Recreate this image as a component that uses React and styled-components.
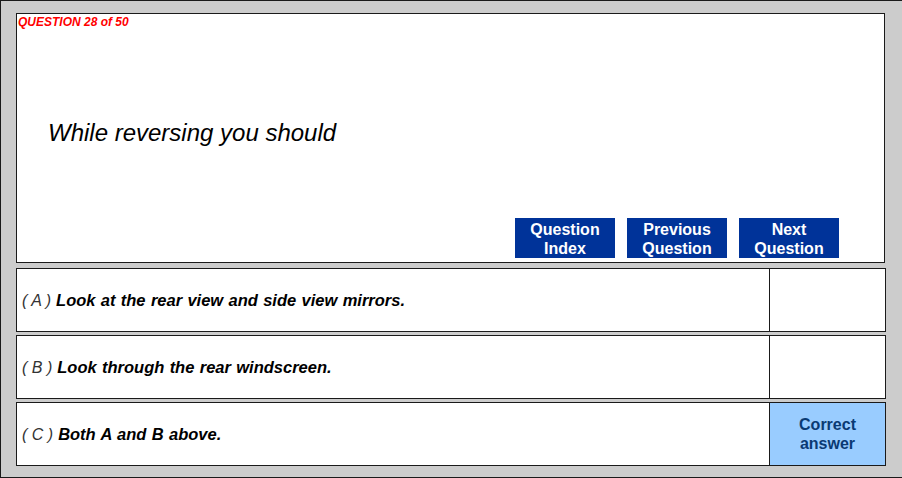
import React from "react";
import styled, { createGlobalStyle } from "styled-components";

const Global = createGlobalStyle`
  html, body { margin: 0; padding: 0; background: #cccccc; }
  * { box-sizing: border-box; }
`;

const Frame = styled.div`
  width: 902px;
  height: 478px;
  background: #cccccc;
  border-left: 1px solid #1a1a1a;
  border-top: 1px solid #1a1a1a;
  border-bottom: 1px solid #1a1a1a;
  padding: 12px 0 0 15px;
  font-family: "Liberation Sans", Arial, sans-serif;
  display: flex;
  flex-direction: column;
`;

const QuestionPanel = styled.section`
  width: 869px;
  height: 250px;
  background: #ffffff;
  border: 1px solid #1a1a1a;
  display: flex;
  flex-direction: column;
`;

const Counter = styled.div`
  color: #ff0000;
  font-size: 12px;
  font-weight: bold;
  font-style: italic;
  padding: 1px 0 0 1px;
  line-height: 14px;
`;

const QuestionText = styled.div`
  margin: 90px 0 0 31px;
  font-size: 24px;
  font-style: italic;
  color: #000;
  line-height: 28px;
`;

const ButtonRow = styled.div`
  margin-top: auto;
  display: flex;
  justify-content: flex-end;
  gap: 12px;
  padding: 0 45px 4px 0;
`;

const NavButton = styled.button`
  width: 100px;
  height: 40px;
  border: none;
  padding: 1px 0 0;
  margin: 0;
  background: #003399;
  color: #ffffff;
  font-family: "Liberation Sans", Arial, sans-serif;
  font-size: 16px;
  font-weight: bold;
  line-height: 19px;
  text-align: center;
  cursor: pointer;
`;

const Answers = styled.div`
  margin-top: 5px;
  display: flex;
  flex-direction: column;
  gap: 3px;
`;

const AnswerRow = styled.div`
  width: 870px;
  height: 64px;
  background: #ffffff;
  border: 1px solid #1a1a1a;
  display: grid;
  grid-template-columns: 1fr 115px;
`;

const AnswerText = styled.div`
  display: flex;
  align-items: center;
  padding: 0 0 0 5px;
  border-right: 1px solid #1a1a1a;
`;

const Line = styled.p`
  margin: 0;
  font-size: 16.5px;
  line-height: 20px;
  font-style: italic;
  font-weight: bold;
  color: #000;
`;

const Letter = styled.span`
  font-size: 16px;
  font-weight: normal;
  color: #333;
  margin-right: 5px;
  white-space: pre;
`;

const Body = styled.span`
  word-spacing: 0.75px;
`;

const Mark = styled.div`
  background: ${(p) => (p.$correct ? "#99ccff" : "#ffffff")};
  color: #0a3a73;
  font-size: 16px;
  font-weight: bold;
  line-height: 19px;
  display: flex;
  align-items: center;
  justify-content: center;
  text-align: center;
`;

const answers = [
  { key: "A", text: "Look at the rear view and side view mirrors." },
  { key: "B", text: "Look through the rear windscreen." },
  { key: "C", text: "Both A and B above.", correct: true },
];

export default function App() {
  return (
    <>
      <Global />
      <Frame>
        <QuestionPanel>
          <Counter>QUESTION 28 of 50</Counter>
          <QuestionText>While reversing you should</QuestionText>
          <ButtonRow>
            <NavButton>Question<br />Index</NavButton>
            <NavButton>Previous<br />Question</NavButton>
            <NavButton>Next<br />Question</NavButton>
          </ButtonRow>
        </QuestionPanel>
        <Answers>
          {answers.map((a) => (
            <AnswerRow key={a.key}>
              <AnswerText>
                <Line>
                  <Letter>( {a.key} )</Letter>
                  <Body>{a.text}</Body>
                </Line>
              </AnswerText>
              <Mark $correct={a.correct}>
                {a.correct ? (
                  <span>Correct<br />answer</span>
                ) : null}
              </Mark>
            </AnswerRow>
          ))}
        </Answers>
      </Frame>
    </>
  );
}
